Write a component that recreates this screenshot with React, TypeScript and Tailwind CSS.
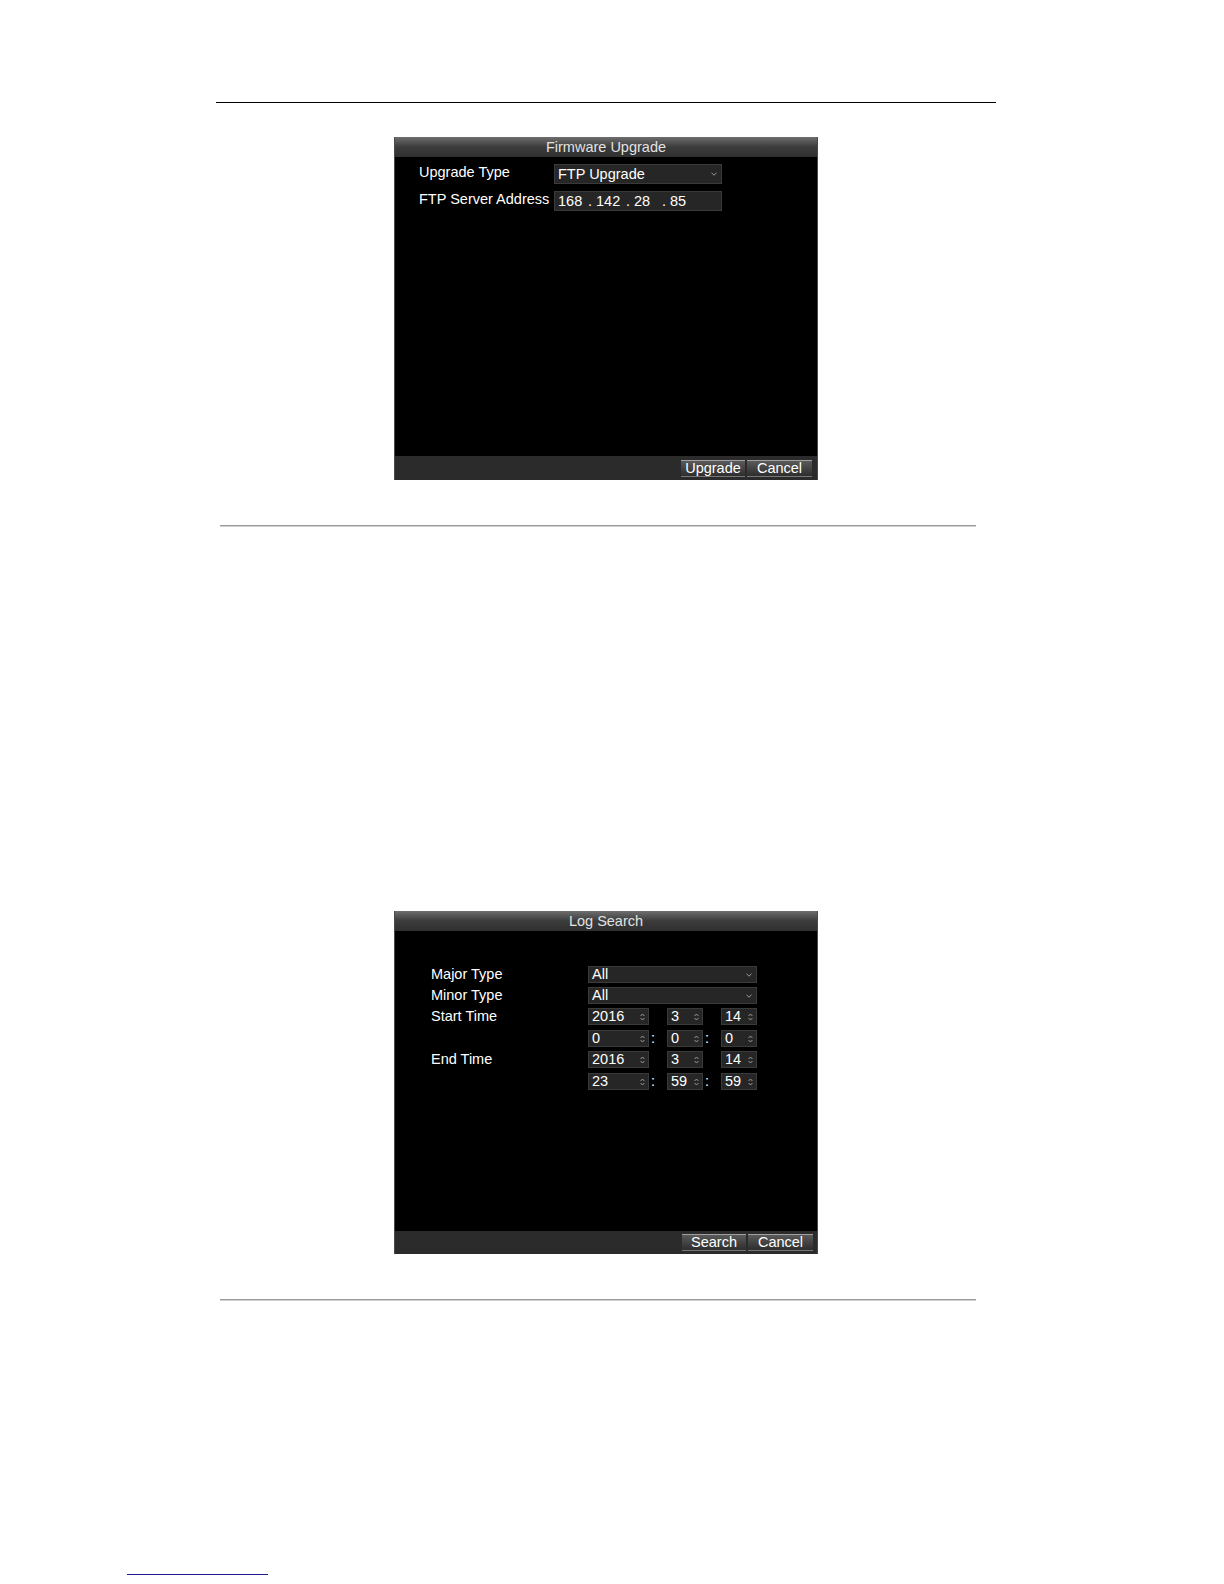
import React from 'react';

const font = { fontFamily: '"Liberation Sans", Arial, sans-serif' };

const Chevron: React.FC = () => (
  <svg width="6" height="4" viewBox="0 0 6 4" className="shrink-0">
    <path d="M0.5 0.8 L3 3.2 L5.5 0.8" fill="none" stroke="#9a9a9a" strokeWidth="1" />
  </svg>
);

const Spin: React.FC = () => (
  <svg width="5" height="8" viewBox="0 0 5 8" className="shrink-0">
    <path d="M0.6 3 L2.5 1 L4.4 3 M0.6 5 L2.5 7 L4.4 5" fill="none" stroke="#9a9a9a" strokeWidth="1" />
  </svg>
);

const TitleBar: React.FC<{ title: string }> = ({ title }) => (
  <div className="h-[20px] flex items-center justify-center bg-linear-to-b from-[#6e6e6e] via-[#3c3c3c] to-[#2f2f2f] text-[14.5px] text-[#e2e2e2] leading-none">
    {title}
  </div>
);

const Btn: React.FC<{ label: string; w: string }> = ({ label, w }) => (
  <div
    className={`${w} h-[17px] flex items-center justify-center bg-linear-to-b from-[#5a5a5a] to-[#2e2e2e] border-t border-t-[#a0a0a0] border-b border-b-[#777] text-white text-[14.5px] leading-none`}
  >
    {label}
  </div>
);

const Select: React.FC<{ value: string; h: string; w: string }> = ({ value, h, w }) => (
  <div className={`${w} ${h} bg-[#262626] border border-[#3a3a3a] flex items-center justify-between pl-[3px] pr-[4px] text-white text-[14.5px] leading-none`}>
    <span>{value}</span>
    <Chevron />
  </div>
);

const SpinBox: React.FC<{ value: string; w: string }> = ({ value, w }) => (
  <div className={`${w} h-[17px] bg-[#262626] border border-[#3a3a3a] flex items-center justify-between pl-[3px] pr-[3px] text-white text-[14.5px] leading-none`}>
    <span>{value}</span>
    <Spin />
  </div>
);

const Colon: React.FC = () => (
  <div className="w-[18px] text-white text-[14.5px] leading-none flex justify-start pl-[2px]">:</div>
);

const Gap: React.FC = () => <div className="w-[18px]" />;

const DateRow: React.FC<{ a: string; b: string; c: string; colons?: boolean }> = ({ a, b, c, colons }) => (
  <div className="flex items-center">
    <SpinBox value={a} w="w-[61px]" />
    {colons ? <Colon /> : <Gap />}
    <SpinBox value={b} w="w-[36px]" />
    {colons ? <Colon /> : <Gap />}
    <SpinBox value={c} w="w-[36px]" />
  </div>
);

const Row: React.FC<{ label?: string; extra?: boolean; children: React.ReactNode }> = ({ label, extra, children }) => (
  <div className={`flex items-center ${extra ? 'mt-[1px]' : ''}`}>
    <div className="w-[157px] text-white text-[14.5px] leading-none">{label}</div>
    {children}
  </div>
);

const FirmwareUpgrade: React.FC = () => (
  <div className="ml-[394px] w-[424px] h-[343px] bg-black border-x border-[#4a4a4a] flex flex-col">
    <TitleBar title="Firmware Upgrade" />
    <div className="flex-1 pl-[24px] pt-[7px] flex flex-col gap-[7px]">
      <div className="flex items-center">
        <div className="w-[135px] text-white text-[14.5px] leading-none -mt-[3px]">Upgrade Type</div>
        <Select value="FTP Upgrade" h="h-[20px]" w="w-[168px]" />
      </div>
      <div className="flex items-center">
        <div className="w-[135px] text-white text-[14.5px] leading-none -mt-[3px] whitespace-nowrap">FTP Server Address</div>
        <div className="w-[168px] h-[20px] bg-[#262626] border border-[#3a3a3a] flex items-center pl-[3px] text-white text-[14.5px] leading-none">
          <span className="w-[30px]">168</span>
          <span className="w-[38px]">. 142</span>
          <span className="w-[36px]">. 28</span>
          <span>. 85</span>
        </div>
      </div>
    </div>
    <div className="h-[24px] bg-[#2b2b2b] flex items-center justify-end pr-[5px] gap-[2px]">
      <Btn label="Upgrade" w="w-[64px]" />
      <Btn label="Cancel" w="w-[65px]" />
    </div>
  </div>
);

const LogSearch: React.FC = () => (
  <div className="ml-[394px] w-[424px] h-[343px] bg-black border-x border-[#4a4a4a] flex flex-col">
    <TitleBar title="Log Search" />
    <div className="flex-1 pl-[36px] pt-[35px] flex flex-col gap-[4px]">
      <Row label="Major Type">
        <Select value="All" h="h-[17px]" w="w-[169px]" />
      </Row>
      <Row label="Minor Type">
        <Select value="All" h="h-[17px]" w="w-[169px]" />
      </Row>
      <Row label="Start Time">
        <DateRow a="2016" b="3" c="14" />
      </Row>
      <Row extra>
        <DateRow a="0" b="0" c="0" colons />
      </Row>
      <Row label="End Time">
        <DateRow a="2016" b="3" c="14" />
      </Row>
      <Row extra>
        <DateRow a="23" b="59" c="59" colons />
      </Row>
    </div>
    <div className="h-[23px] bg-[#2b2b2b] flex items-center justify-end pr-[4px] gap-[2px]">
      <Btn label="Search" w="w-[64px]" />
      <Btn label="Cancel" w="w-[65px]" />
    </div>
  </div>
);

const App: React.FC = () => {
  return (
    <div className="w-full h-screen bg-white overflow-hidden" style={font}>
      <div className="pt-[102px]">
        <div className="ml-[216px] w-[780px] h-px bg-black" />
      </div>
      <div className="mt-[34px]">
        <FirmwareUpgrade />
      </div>
      <div className="mt-[45px] ml-[220px] w-[756px] h-[2px] bg-[#9a9a9a] border-b border-[#d0d0d0]" />
      <div className="mt-[384px]">
        <LogSearch />
      </div>
      <div className="mt-[45px] ml-[220px] w-[756px] h-[2px] bg-[#9a9a9a] border-b border-[#d0d0d0]" />
      <div className="mt-[273px] ml-[127px] w-[141px] h-px bg-[#1c1c8c]" />
    </div>
  );
};

export default App;
